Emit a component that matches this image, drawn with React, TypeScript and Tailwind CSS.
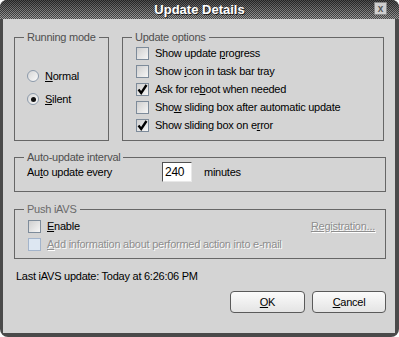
import { ReactNode } from 'react';

function Check({ checked = false, disabled = false }: { checked?: boolean; disabled?: boolean }) {
  return (
    <div
      className={[
        'relative h-[13px] w-[13px] shrink-0 border',
        disabled
          ? 'border-[#a3b4cb] bg-[#dde7f2]'
          : 'border-[#7d8b9a] bg-gradient-to-br from-[#cfcfcf] to-[#f6f6f6]',
      ].join(' ')}
    >
      {checked && (
        <svg viewBox="0 0 13 13" className="absolute left-[-1px] top-[-1px] h-[13px] w-[13px]">
          <path d="M2.5 6.5 L5.2 10 L10.5 2" fill="none" stroke="#000" strokeWidth="2.3" />
        </svg>
      )}
    </div>
  );
}

function Radio({ selected = false }: { selected?: boolean }) {
  return (
    <div className="flex h-[12px] w-[12px] shrink-0 items-center justify-center rounded-full border border-[#8c9aab] bg-gradient-to-br from-[#d6d6d6] to-[#fafafa]">
      {selected && <div className="h-[5px] w-[5px] rounded-full bg-[#111]" />}
    </div>
  );
}

function Group({
  label,
  className,
  labelClass = 'text-[#4f4f4f]',
  children,
}: {
  label: string;
  className: string;
  labelClass?: string;
  children: ReactNode;
}) {
  return (
    <fieldset className={['border border-[#666]', className].join(' ')}>
      <legend className={['ml-[9px] px-[3px] leading-[13px]', labelClass].join(' ')}>{label}</legend>
      {children}
    </fieldset>
  );
}

function Row({ children }: { children: ReactNode }) {
  return <div className="flex h-[18px] items-center gap-[6px]">{children}</div>;
}

const disabledText = 'text-[#8e8e8e] [text-shadow:1px_1px_0_#fff]';

export default function App() {
  return (
    <div className="h-[337px] w-[399px] bg-white">
      <div className="flex h-full flex-col overflow-hidden rounded-t-[7px] rounded-b-[8px] bg-[#4a4a4a] font-['Liberation_Sans',Arial,sans-serif]">
        {/* Title bar */}
        <div className="relative flex h-[19px] shrink-0 items-center justify-center bg-[image:repeating-conic-gradient(rgba(0,0,0,0.55)_0_25%,transparent_0_50%),linear-gradient(#4a4a4a,#a0a0a0)] bg-[length:2px_2px,100%_100%]">
          <span className="text-[13px] font-bold leading-none text-white [text-shadow:1px_1px_0_#222]">
            Update Details
          </span>
          <div className="absolute right-[12px] top-[2px] flex h-[13px] w-[13px] items-center justify-center border border-[#8a8a8a] bg-[#cfcfcf] text-[10px] font-bold leading-none text-[#555]">
            x
          </div>
        </div>

        {/* Body */}
        <div className="ml-[3px] mr-[4px] mb-[4px] flex flex-1 flex-col bg-[#d4d4d4] pl-[11px] pr-[9px] pt-[12px] text-[11px] tracking-[-0.25px] text-black">
          <div className="flex gap-[13px]">
            <Group label="Running mode" className="h-[110px] w-[95px]">
              <div className="flex flex-col gap-[5px] pl-[12px] pt-[23px]">
                <Row>
                  <Radio />
                  <span>
                    <span className="underline">N</span>ormal
                  </span>
                </Row>
                <Row>
                  <Radio selected />
                  <span>
                    <span className="underline">S</span>ilent
                  </span>
                </Row>
              </div>
            </Group>
            <Group label="Update options" className="h-[110px] w-[262px]">
              <div className="flex flex-col pl-[13px]">
                <Row>
                  <Check />
                  <span>
                    Show update <span className="underline">p</span>rogress
                  </span>
                </Row>
                <Row>
                  <Check />
                  <span>
                    Show <span className="underline">i</span>con in task bar tray
                  </span>
                </Row>
                <Row>
                  <Check checked />
                  <span>
                    Ask for re<span className="underline">b</span>oot when needed
                  </span>
                </Row>
                <Row>
                  <Check />
                  <span>
                    Sho<span className="underline">w</span> sliding box after automatic update
                  </span>
                </Row>
                <Row>
                  <Check checked />
                  <span>
                    Show sliding box on e<span className="underline">r</span>ror
                  </span>
                </Row>
              </div>
            </Group>
          </div>

          <Group label="Auto-update interval" className="mt-[10px] h-[41px] w-[372px]">
            <div className="-mt-[2px] flex h-[20px] items-center pl-[12px]">
              <span className="w-[135px]">
                Au<span className="underline">t</span>o update every
              </span>
              <div className="flex h-[20px] w-[30px] items-center border border-b-[#e8e8e8] border-l-[#505050] border-r-[#e8e8e8] border-t-[#505050] bg-white pl-[2px] text-[12px]">
                240
              </div>
              <span className="ml-[12px]">minutes</span>
            </div>
          </Group>

          <Group label="Push iAVS" labelClass="text-[#6a6a6a]" className="mt-[11px] h-[56px] w-[372px]">
            <div className="mt-[1px] flex flex-col pl-[13px] pr-[10px]">
              <div className="flex h-[18px] items-center justify-between">
                <div className="flex items-center gap-[6px]">
                  <Check />
                  <span>
                    <span className="underline">E</span>nable
                  </span>
                </div>
                <span className={['underline', disabledText].join(' ')}>Registration...</span>
              </div>
              <Row>
                <Check disabled />
                <span className={disabledText}>
                  <span className="underline">A</span>dd information about performed action into e-mail
                </span>
              </Row>
            </div>
          </Group>

          <div className="ml-[2px] mt-[11px] leading-[13px]">Last iAVS update: Today at 6:26:06 PM</div>

          <div className="mt-[8px] flex justify-end gap-[7px]">
            <button className="h-[22px] w-[75px] rounded-[4px] border border-[#5a5a5a] bg-gradient-to-b from-[#fbfbfb] to-[#e4e4e4]">
              <span className="underline">O</span>K
            </button>
            <button className="h-[22px] w-[74px] rounded-[4px] border border-[#5a5a5a] bg-gradient-to-b from-[#fbfbfb] to-[#e4e4e4]">
              <span className="underline">C</span>ancel
            </button>
          </div>
        </div>
      </div>
    </div>
  );
}
